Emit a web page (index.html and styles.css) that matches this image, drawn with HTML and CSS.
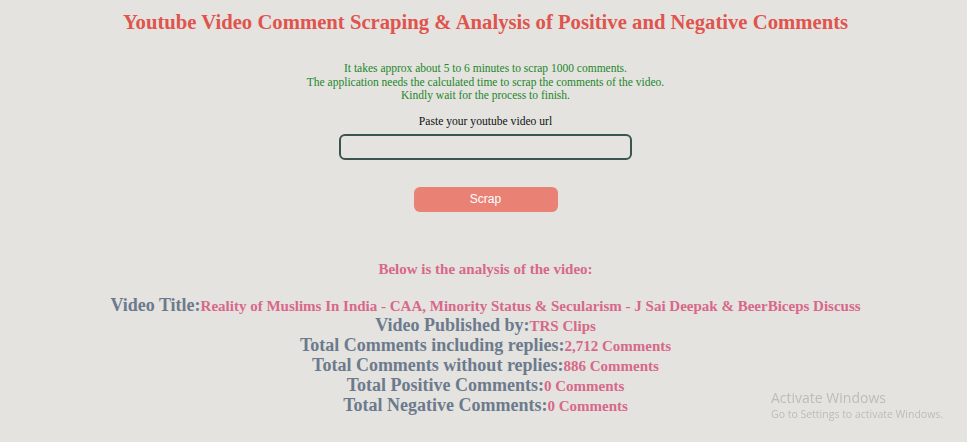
FILE: index.html
```html
<!DOCTYPE html>
<html>
<head>
<meta charset="utf-8">
<link rel="stylesheet" href="styles.css">
</head>
<body>
<div class="page">
  <h1 class="title">Youtube Video Comment Scraping &amp; Analysis of Positive and Negative Comments</h1>
  <div class="notice">
    <p>It takes approx about 5 to 6 minutes to scrap 1000 comments.</p>
    <p>The application needs the calculated time to scrap the comments of the video.</p>
    <p>Kindly wait for the process to finish.</p>
  </div>
  <form class="form">
    <label class="label">Paste your youtube video url</label>
    <input class="url" type="text">
    <button class="btn" type="button">Scrap</button>
  </form>
  <h3 class="below">Below is the analysis of the video:</h3>
  <div class="stats">
    <div class="row"><span class="k">Video Title:</span><span class="v">Reality of Muslims In India - CAA, Minority Status &amp; Secularism - J Sai Deepak &amp; BeerBiceps Discuss</span></div>
    <div class="row"><span class="k">Video Published by:</span><span class="v">TRS Clips</span></div>
    <div class="row"><span class="k">Total Comments including replies:</span><span class="v">2,712 Comments</span></div>
    <div class="row"><span class="k">Total Comments without replies:</span><span class="v">886 Comments</span></div>
    <div class="row"><span class="k">Total Positive Comments:</span><span class="v">0 Comments</span></div>
    <div class="row"><span class="k">Total Negative Comments:</span><span class="v">0 Comments</span></div>
  </div>
</div>
<div class="watermark">
  <div class="wm1">Activate Windows</div>
  <div class="wm2">Go to Settings to activate Windows.</div>
</div>
</body>
</html>
```
FILE: styles.css
```css
html, body {
  margin: 0;
  padding: 0;
  background: #e4e3df;
}
body {
  font-family: "Liberation Serif", "Times New Roman", serif;
}
.page {
  display: flex;
  flex-direction: column;
  align-items: center;
  padding-top: 9px;
  padding-left: 4px;
}
.title {
  margin: 0;
  font-size: 20.7px;
  font-weight: bold;
  color: #e0544d;
  line-height: 26px;
}
.notice {
  margin-top: 27px;
  text-align: center;
  color: #23862a;
  font-size: 11.5px;
  line-height: 13.5px;
}
.notice p {
  margin: 0;
}
.form {
  display: flex;
  flex-direction: column;
  align-items: center;
  margin-top: 12px;
}
.label {
  font-size: 11.6px;
  color: #111;
  line-height: 14px;
}
.url {
  margin-top: 5px;
  width: 293px;
  height: 26px;
  box-sizing: border-box;
  border: 2px solid #3a5550;
  border-radius: 6px;
  background: transparent;
  outline: none;
}
.btn {
  margin-top: 27px;
  width: 144px;
  height: 25px;
  border: none;
  border-radius: 6px;
  background: #e98174;
  color: #fff;
  font-family: "Liberation Sans", Arial, sans-serif;
  font-size: 12px;
}
.below {
  margin: 48px 0 0;
  font-size: 15px;
  font-weight: bold;
  color: #d8688a;
  line-height: 18px;
}
.stats {
  margin-top: 17px;
  display: flex;
  flex-direction: column;
  align-items: center;
}
.row {
  height: 20px;
  font-weight: bold;
  line-height: 20px;
  white-space: nowrap;
}
.row .k {
  color: #6c7a8d;
  font-size: 18px;
}
.row .v {
  color: #d8688a;
  font-size: 15px;
}
.watermark {
  position: fixed;
  left: 771px;
  top: 389px;
  font-family: "Open Sans", "Noto Sans", sans-serif;
  color: #bdbcb8;
}
.wm1 {
  font-size: 14px;
  line-height: 18px;
}
.wm2 {
  font-size: 10.5px;
  line-height: 14px;
}
```
